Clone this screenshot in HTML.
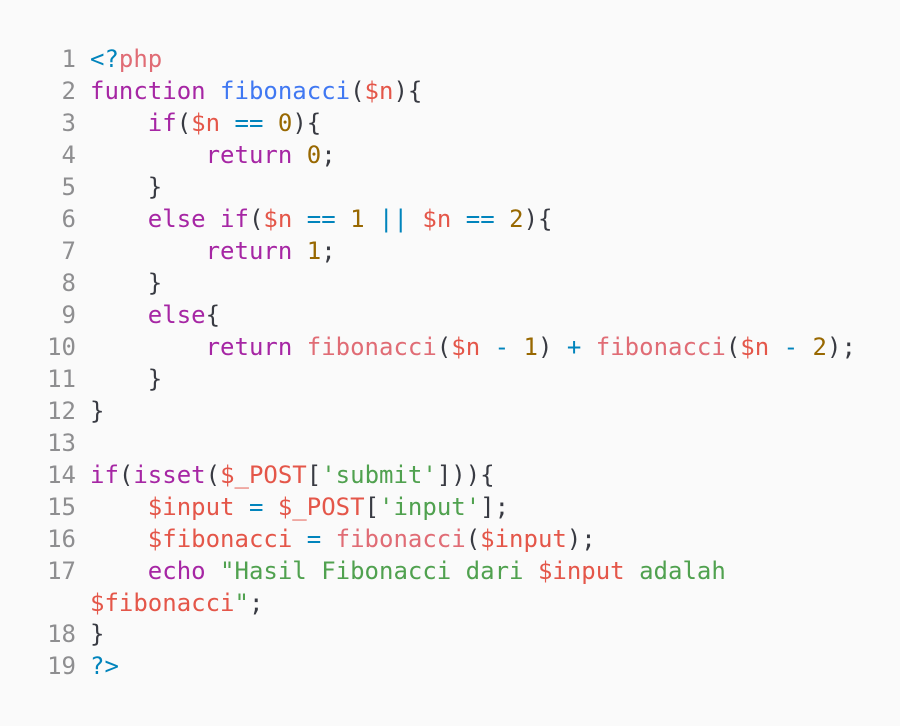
<!DOCTYPE html>
<html><head><meta charset="utf-8"><style>
html,body{margin:0;padding:0;background:#fafafa;width:900px;height:726px;overflow:hidden}
.c{position:absolute;top:43px;left:0;font-family:"DejaVu Sans Mono","Liberation Mono",monospace;font-size:24px;line-height:32px;color:#383a42}
.r{display:flex;height:32px;white-space:pre}
.w{height:31px}
.n{width:76px;text-align:right;color:#8e8e90;flex:none}
.t{padding-left:14px}
.k{color:#a626a4}.f{color:#4078f2}.v{color:#e45649}.m{color:#986801}.o{color:#0184bc}.s{color:#50a14f}.p{color:#e06c75}
</style></head><body><div class="c">
<div class="r"><span class="n">1</span><span class="t"><span class="o">&lt;?</span><span class="p">php</span></span></div>
<div class="r"><span class="n">2</span><span class="t"><span class="k">function</span> <span class="f">fibonacci</span>(<span class="v">$n</span>){</span></div>
<div class="r"><span class="n">3</span><span class="t">    <span class="k">if</span>(<span class="v">$n</span> <span class="o">==</span> <span class="m">0</span>){</span></div>
<div class="r"><span class="n">4</span><span class="t">        <span class="k">return</span> <span class="m">0</span>;</span></div>
<div class="r"><span class="n">5</span><span class="t">    }</span></div>
<div class="r"><span class="n">6</span><span class="t">    <span class="k">else</span> <span class="k">if</span>(<span class="v">$n</span> <span class="o">==</span> <span class="m">1</span> <span class="o">||</span> <span class="v">$n</span> <span class="o">==</span> <span class="m">2</span>){</span></div>
<div class="r"><span class="n">7</span><span class="t">        <span class="k">return</span> <span class="m">1</span>;</span></div>
<div class="r"><span class="n">8</span><span class="t">    }</span></div>
<div class="r"><span class="n">9</span><span class="t">    <span class="k">else</span>{</span></div>
<div class="r"><span class="n">10</span><span class="t">        <span class="k">return</span> <span class="p">fibonacci</span>(<span class="v">$n</span> <span class="o">-</span> <span class="m">1</span>) <span class="o">+</span> <span class="p">fibonacci</span>(<span class="v">$n</span> <span class="o">-</span> <span class="m">2</span>);</span></div>
<div class="r"><span class="n">11</span><span class="t">    }</span></div>
<div class="r"><span class="n">12</span><span class="t">}</span></div>
<div class="r"><span class="n">13</span><span class="t"></span></div>
<div class="r"><span class="n">14</span><span class="t"><span class="k">if</span>(<span class="k">isset</span>(<span class="v">$_POST</span>[<span class="s">'submit'</span>])){</span></div>
<div class="r"><span class="n">15</span><span class="t">    <span class="v">$input</span> <span class="o">=</span> <span class="v">$_POST</span>[<span class="s">'input'</span>];</span></div>
<div class="r"><span class="n">16</span><span class="t">    <span class="v">$fibonacci</span> <span class="o">=</span> <span class="p">fibonacci</span>(<span class="v">$input</span>);</span></div>
<div class="r"><span class="n">17</span><span class="t">    <span class="k">echo</span> <span class="s">"Hasil Fibonacci dari </span><span class="v">$input</span><span class="s"> adalah</span></span></div>
<div class="r w"><span class="n"></span><span class="t"><span class="v">$fibonacci</span><span class="s">"</span>;</span></div>
<div class="r"><span class="n">18</span><span class="t">}</span></div>
<div class="r"><span class="n">19</span><span class="t"><span class="o">?&gt;</span></span></div>
</div></body></html>
